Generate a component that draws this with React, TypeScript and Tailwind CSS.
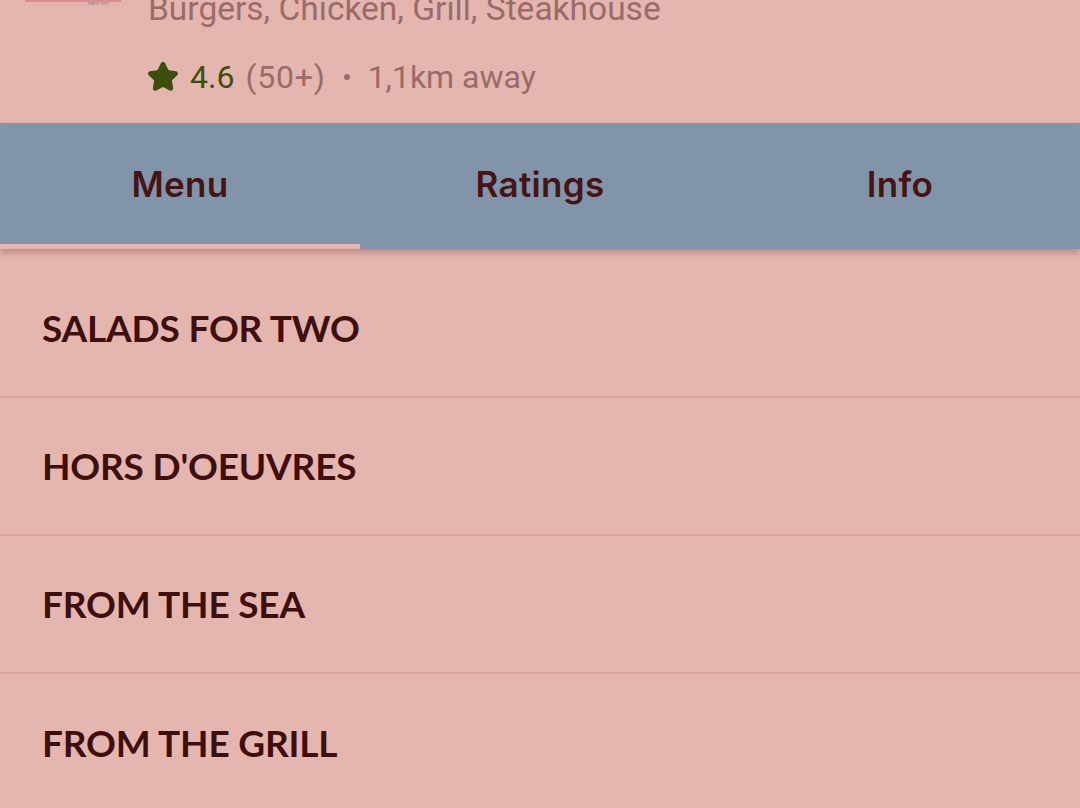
import { Star } from "lucide-react";

const sections = ["SALADS FOR TWO", "HORS D'OEUVRES", "FROM THE SEA", "FROM THE GRILL"];
const tabs = ["Menu", "Ratings", "Info"];

export default function App() {
  return (
    <div className="w-[1080px] h-[808px] overflow-hidden bg-[#e5b5b0] flex flex-col">
      {/* Header */}
      <header className="relative h-[123px] shrink-0">
        <div className="absolute left-[25px] top-0 w-[96px] h-[2px] bg-[#d98e92]" />
        <span className="absolute left-[88px] top-[2px] text-[4px] leading-none text-[#8a6a6a] font-['Roboto',sans-serif]">
          SINCE 1977
        </span>
        <div className="pl-[148px] flex flex-col font-['Roboto',sans-serif]">
          <p className="mt-[-11px] text-[33.5px] leading-[40px] text-[#9a6c69] whitespace-nowrap">
            Burgers, Chicken, Grill, Steakhouse
          </p>
          <div className="mt-[28px] flex items-center text-[32px] leading-[40px] whitespace-nowrap">
            <Star className="w-[32px] h-[32px] ml-[-1px] mr-[11px] text-[#3c4d0d]" fill="#3c4d0d" strokeWidth={2.5} strokeLinejoin="round" />
            <span className="text-[#3c4d0d]">4.6</span>
            <span className="ml-[11px] text-[#9a6c69] tracking-[0.8px]">(50+)</span>
            <span className="mx-[18px] w-[6px] h-[6px] rounded-full bg-[#9a6c69]" />
            <span className="text-[#9a6c69]">1,1km away</span>
          </div>
        </div>
      </header>

      {/* Tabs */}
      <nav className="relative z-10 h-[126px] shrink-0 bg-[#8294aa] grid grid-cols-3 shadow-[0_4px_6px_rgba(120,60,60,0.35)]">
        {tabs.map((t, i) => (
          <div key={t} className="relative flex items-center justify-center pb-[4px]">
            <span className="text-[35px] font-semibold text-[#451414] font-['Inter',sans-serif] tracking-[0.3px]">{t}</span>
            {i === 0 && <div className="absolute left-0 right-0 bottom-0 h-[5px] bg-[#e5b5b0]" />}
          </div>
        ))}
      </nav>

      {/* Menu sections */}
      <div className="flex flex-col pt-[11px]">
        {sections.map((s, i) => (
          <div
            key={s}
            className={`h-[138px] shrink-0 flex items-center pl-[42px] ${i < sections.length - 1 ? "border-b-2 border-[#dca7a3]" : ""}`}
          >
            <span className="text-[37px] font-bold text-[#3f0f0d] font-['Lato',sans-serif] tracking-[-0.2px]">{s}</span>
          </div>
        ))}
      </div>
    </div>
  );
}
